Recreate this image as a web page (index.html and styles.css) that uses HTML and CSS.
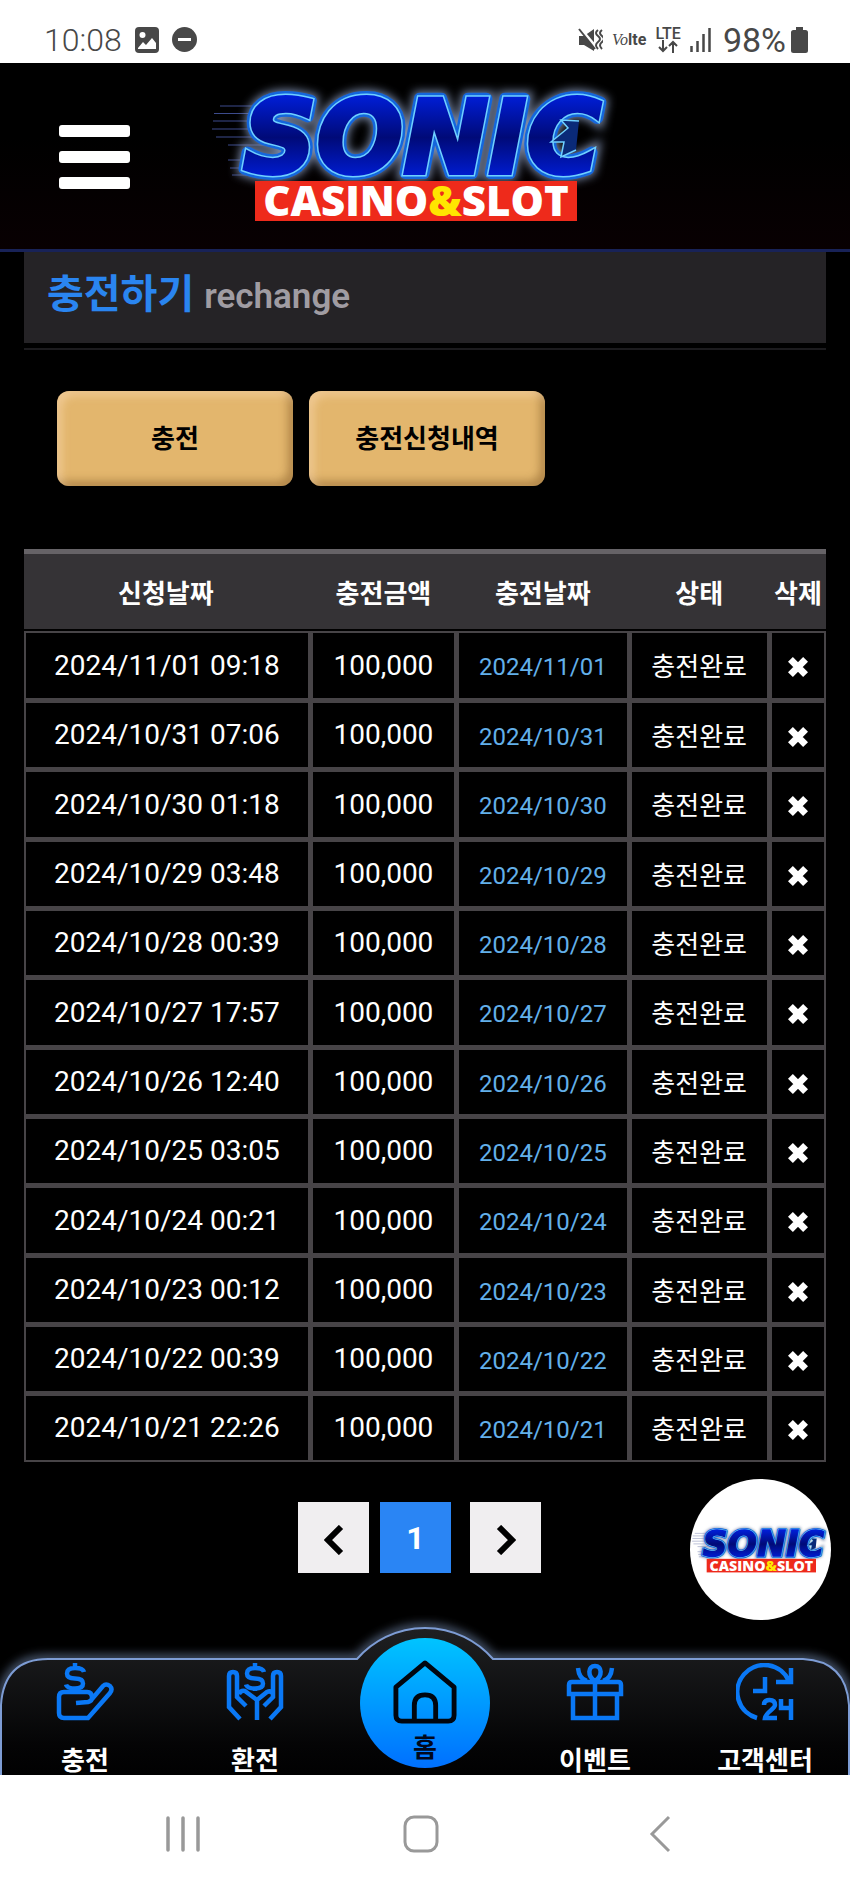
FILE: index.html
```html
<!DOCTYPE html>
<html lang="ko">
<head>
<meta charset="utf-8">
<meta name="viewport" content="width=device-width, initial-scale=1">
<title>충전하기</title>
<link rel="stylesheet" href="styles.css">
</head>
<body>
<svg class="defs" aria-hidden="true">
  <defs>
    <linearGradient id="letter" x1="0" y1="0" x2="0" y2="1">
      <stop offset="0" stop-color="#0026ff"/><stop offset=".5" stop-color="#000a78"/><stop offset="1" stop-color="#0026ff"/>
    </linearGradient>
    <linearGradient id="bar" x1="0" y1="0" x2="0" y2="1">
      <stop offset="0" stop-color="#1f2022"/><stop offset=".75" stop-color="#040405"/><stop offset="1" stop-color="#000"/>
    </linearGradient>
    <filter id="soft" x="-20%" y="-40%" width="140%" height="180%"><feGaussianBlur stdDeviation="5"/></filter>
    <symbol id="logo" viewBox="0 0 430 170">
      <g stroke="#3c4b8c" stroke-width="1"><path d="M20 36h60M14 43.500h60M13 51h60M12 59h60M16 67h60M28 75h40M28 90h30M30 98h30M32 105h40"/></g>
      <text class="logo-sonic logo-halo" x="43" y="103">SONIC</text>
      <text class="logo-sonic logo-glow" x="43" y="103">SONIC</text>
      <text class="logo-sonic logo-edge" x="43" y="103">SONIC</text>
      <text class="logo-sonic logo-face" x="43" y="103">SONIC</text>
      <path d="M379 51L361 50L368 58L351 72L364 72L361 87L376 80" fill="#0a2a78" stroke="#6fd0ff" stroke-width="1.500"/>
      <rect x="55" y="111" width="322" height="40" fill="#ee2a1b"/>
      <text class="logo-sub" x="216" y="146" text-anchor="middle">CASINO<tspan fill="#ffe600">&amp;</tspan>SLOT</text>
    </symbol>
    <symbol id="x" viewBox="2 2 16 16"><path d="M4.500 4.500l11 11M15.500 4.500l-11 11" stroke="currentColor" stroke-width="5"/></symbol>
  </defs>
</svg>

<div class="status">
  <div class="status-group">
    <span class="clock">10:08</span>
    <svg width="24" height="26" viewBox="0 0 24 26"><rect width="24" height="26" rx="4" fill="#484848"/><circle cx="7.500" cy="8" r="3" fill="#fff"/><path d="M3 21l5-6 3 3 6-7 4 5v6H3z" fill="#fff"/></svg>
    <svg width="25" height="25" viewBox="0 0 25 25"><circle cx="12.500" cy="12.500" r="12.500" fill="#484848"/><path d="M6 12.500h13" stroke="#fff" stroke-width="3"/></svg>
  </div>
  <div class="status-group status-right">
    <svg width="25" height="26" viewBox="0 0 25 26"><path d="M1 9h5l10-7v22l-10-6H1z" fill="#484848"/><path d="M1 0l17 20" stroke="#fff" stroke-width="3"/><path d="M1 2l16 20" stroke="#484848" stroke-width="2"/><path d="M20 3q-4 3 0 6t0 6 0 7M24 3q-4 3 0 6t0 6 0 7" stroke="#484848" stroke-width="2" fill="none"/></svg>
    <span class="volte"><i>Vo</i><b>lte</b></span>
    <span class="lte"><span>LTE</span>
      <svg width="20" height="13" viewBox="0 0 20 13"><path d="M5 0v11M1 7l4 4 4-4M15 13V2M11 6l4-4 4 4" stroke="#484848" stroke-width="2" fill="none"/></svg>
    </span>
    <svg width="22" height="24" viewBox="0 0 22 24"><path d="M1.500 18v6M7.500 13v11M13.500 6v18M19.500 0v24" stroke="#484848" stroke-width="2.500"/></svg>
    <span class="battery">98%
      <svg width="17" height="26" viewBox="0 0 17 26"><path d="M5 0h7v3h2.500q2.500 0 2.500 2.500v18q0 2.500-2.500 2.500h-12Q0 26 0 23.500v-18Q0 3 2.500 3H5z" fill="#484848"/></svg>
    </span>
  </div>
</div>

<header class="top">
  <button class="menu" aria-label="메뉴"><span></span><span></span><span></span></button>
  <a class="brand" href="#" aria-label="SONIC CASINO&amp;SLOT"><svg width="430" height="170"><use href="#logo"/></svg></a>
</header>

<main class="page">
  <h1 class="title">충전하기 <small>rechange</small></h1>
  <div class="tabs"><button>충전</button><button>충전신청내역</button></div>
  <table class="list">
    <colgroup><col class="c1"><col class="c2"><col class="c3"><col class="c4"><col class="c5"></colgroup>
    <thead><tr><th>신청날짜</th><th>충전금액</th><th>충전날짜</th><th>상태</th><th>삭제</th></tr></thead>
    <tbody>
      <tr><td>2024/11/01 09:18</td><td>100,000</td><td>2024/11/01</td><td>충전완료</td><td><button aria-label="삭제"><svg width="22" height="22"><use href="#x"/></svg></button></td></tr>
      <tr><td>2024/10/31 07:06</td><td>100,000</td><td>2024/10/31</td><td>충전완료</td><td><button aria-label="삭제"><svg width="22" height="22"><use href="#x"/></svg></button></td></tr>
      <tr><td>2024/10/30 01:18</td><td>100,000</td><td>2024/10/30</td><td>충전완료</td><td><button aria-label="삭제"><svg width="22" height="22"><use href="#x"/></svg></button></td></tr>
      <tr><td>2024/10/29 03:48</td><td>100,000</td><td>2024/10/29</td><td>충전완료</td><td><button aria-label="삭제"><svg width="22" height="22"><use href="#x"/></svg></button></td></tr>
      <tr><td>2024/10/28 00:39</td><td>100,000</td><td>2024/10/28</td><td>충전완료</td><td><button aria-label="삭제"><svg width="22" height="22"><use href="#x"/></svg></button></td></tr>
      <tr><td>2024/10/27 17:57</td><td>100,000</td><td>2024/10/27</td><td>충전완료</td><td><button aria-label="삭제"><svg width="22" height="22"><use href="#x"/></svg></button></td></tr>
      <tr><td>2024/10/26 12:40</td><td>100,000</td><td>2024/10/26</td><td>충전완료</td><td><button aria-label="삭제"><svg width="22" height="22"><use href="#x"/></svg></button></td></tr>
      <tr><td>2024/10/25 03:05</td><td>100,000</td><td>2024/10/25</td><td>충전완료</td><td><button aria-label="삭제"><svg width="22" height="22"><use href="#x"/></svg></button></td></tr>
      <tr><td>2024/10/24 00:21</td><td>100,000</td><td>2024/10/24</td><td>충전완료</td><td><button aria-label="삭제"><svg width="22" height="22"><use href="#x"/></svg></button></td></tr>
      <tr><td>2024/10/23 00:12</td><td>100,000</td><td>2024/10/23</td><td>충전완료</td><td><button aria-label="삭제"><svg width="22" height="22"><use href="#x"/></svg></button></td></tr>
      <tr><td>2024/10/22 00:39</td><td>100,000</td><td>2024/10/22</td><td>충전완료</td><td><button aria-label="삭제"><svg width="22" height="22"><use href="#x"/></svg></button></td></tr>
      <tr><td>2024/10/21 22:26</td><td>100,000</td><td>2024/10/21</td><td>충전완료</td><td><button aria-label="삭제"><svg width="22" height="22"><use href="#x"/></svg></button></td></tr>
    </tbody>
  </table>
  <nav class="pager" aria-label="페이지">
    <button aria-label="이전"><svg width="20" height="30" viewBox="0 0 20 30"><path d="M17 2L4 15l13 13" stroke="#000" stroke-width="6" fill="none"/></svg></button>
    <button class="current">1</button>
    <button aria-label="다음"><svg width="20" height="30" viewBox="0 0 20 30"><path d="M3 2l13 13L3 28" stroke="#000" stroke-width="6" fill="none"/></svg></button>
  </nav>
</main>

<nav class="dock">
  <a class="float" href="#" aria-label="SONIC"><svg width="146" height="58"><use href="#logo"/></svg></a>
  <svg class="dock-bg" viewBox="0 0 850 160" preserveAspectRatio="none">
    <path d="M1 170V90Q4 44 48 44H357A90 90 0 0 1 493 44H803Q846 46 849 90V170z" fill="none" stroke="#7288ac" stroke-opacity=".7" stroke-width="8" filter="url(#soft)"/>
    <path d="M1 170V90Q4 44 48 44H357A90 90 0 0 1 493 44H803Q846 46 849 90V170z" fill="url(#bar)" stroke="#7d9cd4" stroke-width="2"/>
  </svg>
  <a href="#">
    <svg width="58" height="58" viewBox="0 0 58 58"><g fill="none" stroke="#0a78f5" stroke-width="4.500"><path d="M28 9q-1-4-9-4-8 0-8 5.500 0 5 8 5t8 5q0 5-8 5t-9-4M19 0v5M19 24v4"/><path d="M20 40l12-1q4-1 4-4 0-6-5-6H8q-5 0-5 5v16q0 5 5 5h24l22-25q3-4 0-7-4-3-7 0L36 36"/></g></svg>
    <span>충전</span></a>
  <a href="#">
    <svg width="58" height="58" viewBox="0 0 58 58"><g fill="none" stroke="#0a78f5" stroke-width="4.500"><path d="M38 9q-1-4-9-4-8 0-8 5.500 0 5 8 5t8 5q0 5-8 5t-9-4M29 0v5M29 24v4M14 56L3 44V13q0-4 4-4t4 4v21l9 9M44 56l11-12V13q0-4-4-4t-4 4v21l-9 9M31 57V37L19 28q-4-1-6 3M31 37l10-8q4-2 6 2"/></g></svg>
    <span>환전</span></a>
  <a class="home" href="#">
    <svg width="66" height="66" viewBox="0 0 66 66"><path d="M3 28L33 3l30 25v29q0 6-6 6H9q-6 0-6-6zM22 63V47q0-11 11-11t11 11v16" fill="none" stroke="#00060f" stroke-width="5" stroke-linejoin="round"/></svg>
    <span>홈</span></a>
  <a href="#">
    <svg width="58" height="58" viewBox="0 0 58 58"><g fill="none" stroke="#0a78f5" stroke-width="4.500"><path d="M3 31V22q0-3 3-3h46q3 0 3 3v9zM7 31v24h44V31M29 18v38M29 18c-8-5-7-15 0-15s8 10 0 15zM12 5q1 11 9 13M46 5q-1 11-9 13"/></g></svg>
    <span>이벤트</span></a>
  <a href="#">
    <svg width="58" height="58" viewBox="0 0 58 58"><g fill="none" stroke="#0a78f5" stroke-width="4.500"><path d="M21 55A27 27 0 1 1 53 18M55 5v14H40M29 14v14H17M28 42q0-5 5.500-5t5.500 5c0 4-9 7-10 13h12M45 36v9h10M55 36v21"/></g></svg>
    <span>고객센터</span></a>
</nav>

<div class="system">
  <button aria-label="최근 앱"><svg width="34" height="36" viewBox="0 0 34 36"><path d="M2 2v32M17 2v32M32 2v32" stroke="#999" stroke-width="3.500" stroke-linecap="round"/></svg></button>
  <button class="system-home" aria-label="홈 화면"><svg width="36" height="38" viewBox="0 0 36 38"><rect x="2" y="2" width="32" height="34" rx="9" fill="none" stroke="#999" stroke-width="3"/></svg></button>
  <button aria-label="뒤로"><svg width="22" height="38" viewBox="0 0 22 38"><path d="M20 2L3 19l17 17" fill="none" stroke="#999" stroke-width="3"/></svg></button>
</div>
</body>
</html>
```
FILE: styles.css
```css
* { box-sizing: border-box; }
body { margin: 0; background: #000; color: #fff; font-family: Roboto, "Noto Sans CJK KR", sans-serif; }
button { border: 0; padding: 0; background: none; color: inherit; font: inherit; }
a { color: inherit; text-decoration: none; }
svg { display: block; }
.defs { position: absolute; width: 0; height: 0; }

.status { display: flex; justify-content: space-between; height: 63px; padding: 16px 42px 0 44px; background: #fff; color: #484848; }
.status-group { display: flex; align-items: center; gap: 13px; height: 47px; }
.status-right { gap: 9px; }
.clock { font-size: 32px; font-weight: 300; }
.battery { display: flex; align-items: center; gap: 5px; margin-left: 2px; font-size: 34px; }
.volte { font-size: 16px; }
.volte i { font-family: "Liberation Serif", serif; }
.lte { display: flex; flex-direction: column; align-items: center; font-size: 16px; line-height: 13px; font-weight: 500; }

.top { position: relative; display: flex; justify-content: center; height: 189px; padding: 7px 20px 0 0; border-bottom: 3px solid #182257; background: linear-gradient(#000 40%, #080002); }
.menu { position: absolute; left: 59px; top: 62px; display: flex; flex-direction: column; gap: 14px; width: 71px; }
.menu span { height: 12px; border-radius: 3px; background: #fff; }
.logo-sonic { font: italic 700 102px "DejaVu Sans", sans-serif; }
.logo-halo { fill: #8090b0; stroke: #8090b0; stroke-width: 14px; filter: url(#soft); }
.logo-glow { fill: #0a6ae8; stroke: #1466dc; stroke-width: 12px; stroke-linejoin: round; }
.logo-edge { fill: #6fd0ff; stroke: #6fd0ff; stroke-width: 7px; }
.logo-face { fill: url(#letter); stroke: url(#letter); stroke-width: 4px; }
.logo-sub { font: 800 42px "Open Sans", sans-serif; fill: #fff; }

.page { padding: 0 24px; }
.title { height: 91px; margin: 0; padding: 13px 23px; background: #252326; color: #2a85f0; font-size: 40px; line-height: 60px; font-weight: 700; }
.title small { color: #a09ca2; font-size: 35px; font-weight: 600; }
.tabs { display: flex; gap: 16px; margin-top: 5px; padding: 41px 33px 63px; border-top: 2px solid #1c1b1e; }
.tabs button { width: 236px; height: 95px; padding-bottom: 4px; border-radius: 12px; background: #e3b66d; color: #000; font-size: 26px; font-weight: 700; box-shadow: inset 5px 5px 9px rgba(255, 225, 190, .45), inset -5px -5px 9px rgba(120, 80, 30, .45); }

.list { width: 100%; table-layout: fixed; border-collapse: separate; border-spacing: 0; text-align: center; }
.c1 { width: 36%; }
.c2 { width: 18.25%; }
.c3 { width: 21.5%; }
.c4 { width: 17.5%; }
.c5 { width: 6.75%; }
.list th { height: 82px; padding: 0 5px 0 0; border-top: 5px solid #666367; border-bottom: 2px solid #000; background: #353336; font-size: 26px; font-weight: 700; white-space: nowrap; }
.list th:last-child { padding-right: 2px; }
.list td { height: 69px; padding: 0; border: solid #474447; border-width: 0 5px 5px 0; font-size: 28px; line-height: 40px; white-space: nowrap; }
.list tr:nth-child(3n) td { height: 70px; }
.list tbody tr:first-child td { height: 72px; border-top-width: 2px; }
.list tbody tr:last-child td { height: 66px; border-bottom-width: 2px; }
.list td:first-child { border-left-width: 2px; }
.list td:last-child { border-right-width: 2px; }
.list td:nth-child(n+3) { padding-top: 3px; }
.list td:nth-child(3) { color: #63b0ea; font-size: 24px; }
.list td:nth-child(4) { font-size: 26px; }
.list td button { display: block; margin: 0 auto; }

.pager { display: flex; justify-content: center; gap: 11px; margin-top: 40px; padding-right: 11px; }
.pager button { display: flex; align-items: center; justify-content: center; width: 71px; height: 71px; padding-top: 4px; background: #f0eef0; font-size: 32px; font-weight: 700; }
.pager .current { margin-right: 8px; padding-top: 0; background: #2a85f4; }

.dock { position: relative; display: grid; grid-template-columns: repeat(5, 1fr); height: 160px; margin-top: 42px; padding-top: 48px; }
.dock-bg { position: absolute; left: 0; top: 0; width: 100%; height: 160px; }
.dock > a { position: relative; display: flex; flex-direction: column; align-items: center; gap: 20px; font-size: 26px; line-height: 40px; font-weight: 700; }
.dock .home { justify-self: center; align-self: start; width: 130px; height: 130px; margin-top: -25px; padding-top: 22px; gap: 4px; border-radius: 50%; background: linear-gradient(#00c4ff, #0070ff); color: #00081c; }
.dock > .float { position: absolute; right: 19px; top: -136px; width: 141px; height: 141px; justify-content: center; border-radius: 50%; background: #fff; }

.system { display: flex; justify-content: space-between; align-items: center; height: 114px; padding: 4px 179px 0 166px; background: #fff; }
.system-home { margin-right: 8px; }
```
